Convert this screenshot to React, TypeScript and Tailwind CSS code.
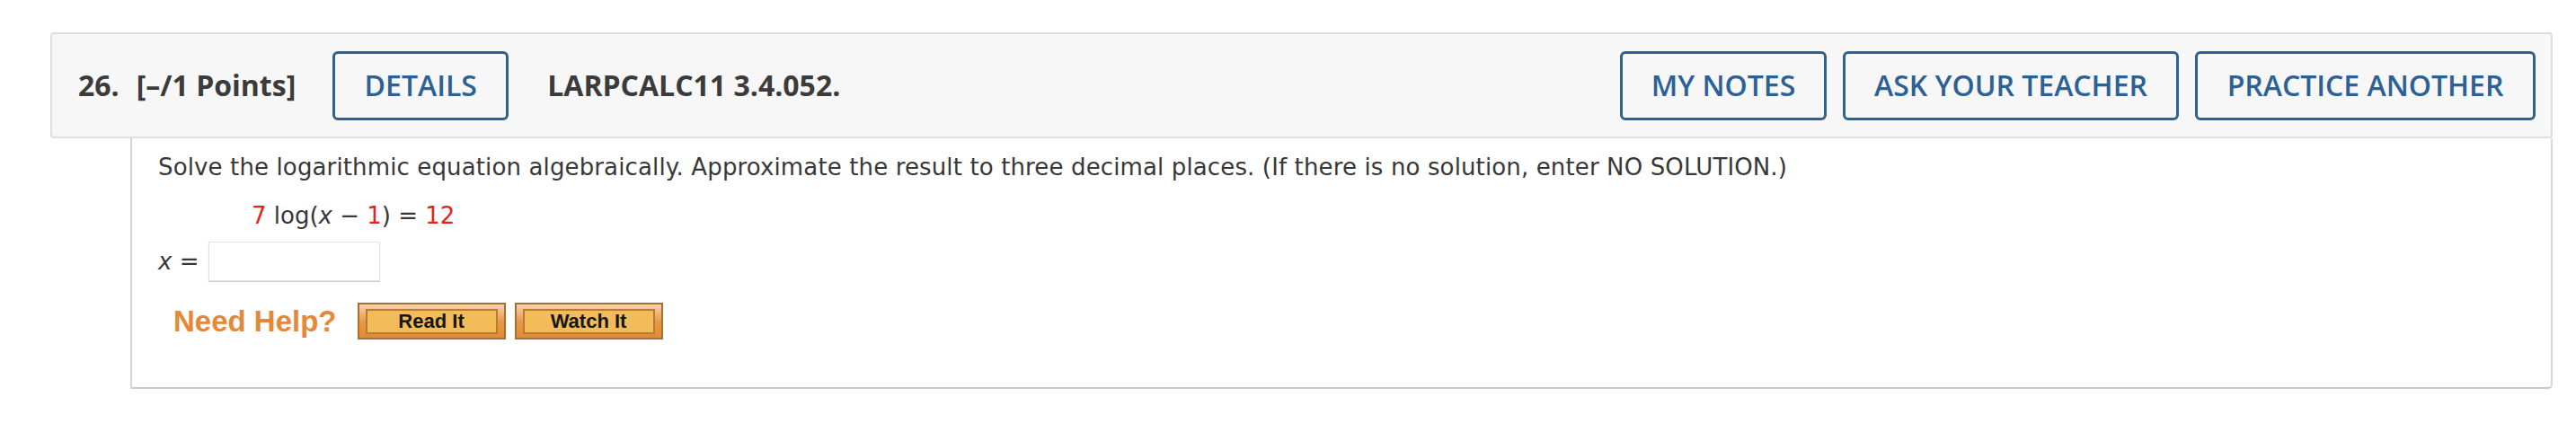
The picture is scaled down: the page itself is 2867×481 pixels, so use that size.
import React from "react";

const headerBtn =
  "h-[77px] flex items-center justify-center rounded-[6px] border-[3px] border-[#2b6194] text-[#2b6194] text-[32px] font-semibold leading-none whitespace-nowrap";

function HelpButton({ label }: { label: string }) {
  return (
    <div className="w-[165px] h-[41px] flex border-2 border-[#a66f33] bg-linear-to-b from-[#f8d3ad] via-[#e99a45] to-[#e38a35] px-[7px] pt-[5px] pb-[4px]">
      <div className="flex-1 flex items-center justify-center border-2 border-[#b97a36] bg-[#f2bd58] text-[22px] font-bold text-[#161616] leading-none font-['Liberation_Sans',Arial,sans-serif]">
        {label}
      </div>
    </div>
  );
}

export default function App() {
  return (
    <div className="min-h-[481px] bg-white pl-[56px] pr-[26px] pt-[36px] font-['Open_Sans',sans-serif]">
      <div className="h-[118px] flex items-center border-2 border-[#dedede] rounded-[4px] bg-[#f7f7f7] pl-[29px] pr-[17px] text-[#3b3b3b]">
        <span className="text-[32px] font-bold leading-none">26.</span>
        <span className="ml-[19px] text-[32px] font-bold leading-none">[–/1 Points]</span>
        <button className={`${headerBtn} ml-[41px] w-[196px]`}>DETAILS</button>
        <span className="ml-[43px] text-[32px] font-bold leading-none">LARPCALC11 3.4.052.</span>
        <div className="ml-auto flex gap-[18px]">
          <button className={`${headerBtn} w-[230px]`}>MY NOTES</button>
          <button className={`${headerBtn} w-[374px]`}>ASK YOUR TEACHER</button>
          <button className={`${headerBtn} w-[379px]`}>PRACTICE ANOTHER</button>
        </div>
      </div>

      <div className="ml-[89px] h-[279px] border-l-2 border-r-2 border-b-2 border-l-[#d4d4d4] border-r-[#d8d8d8] border-b-[#c9c9c9] rounded-br-[5px] pl-[29px] pt-[12px] text-[#383838] font-['DejaVu_Sans',Verdana,sans-serif] text-[26px]">
        <p className="leading-[40px] tracking-[0.13px]">
          Solve the logarithmic equation algebraically. Approximate the result to three decimal places. (If
          there is no solution, enter NO SOLUTION.)
        </p>
        <p className="mt-[14px] ml-[104px] leading-[40px]">
          <span className="text-[#e2231a]">7</span> log(<i>x</i> − <span className="text-[#e2231a]">1</span>) ={" "}
          <span className="text-[#e2231a]">12</span>
        </p>
        <div className="mt-[9px] flex items-center">
          <span className="leading-[30px]">
            <i>x</i> =
          </span>
          <input
            type="text"
            className="ml-[11px] w-[191px] h-[44px] bg-white border border-[#e2e2e2] shadow-[0_1px_1px_rgba(0,0,0,0.18)] outline-none"
          />
        </div>
        <div className="mt-[24px] ml-[17px] flex items-center">
          <span className="text-[33px] font-bold leading-[41px] text-[#e4893a] font-['Liberation_Sans',Arial,sans-serif]">
            Need Help?
          </span>
          <div className="ml-[23px] flex gap-[10px]">
            <HelpButton label="Read It" />
            <HelpButton label="Watch It" />
          </div>
        </div>
      </div>
    </div>
  );
}
